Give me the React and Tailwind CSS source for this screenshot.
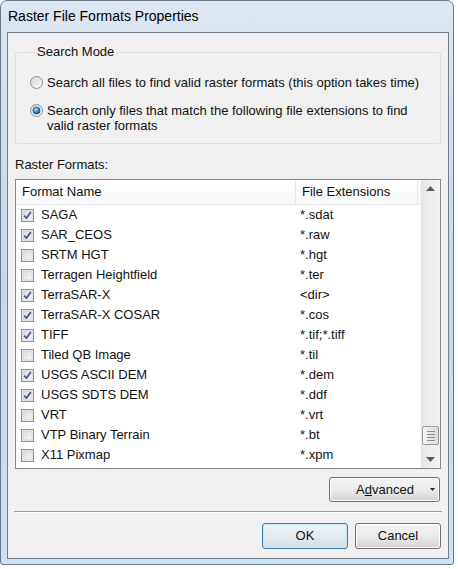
import React from 'react';

const formats = [
    ['SAGA', '*.sdat', true],
    ['SAR_CEOS', '*.raw', true],
    ['SRTM HGT', '*.hgt', false],
    ['Terragen Heightfield', '*.ter', false],
    ['TerraSAR-X', '<dir>', true],
    ['TerraSAR-X COSAR', '*.cos', true],
    ['TIFF', '*.tif;*.tiff', true],
    ['Tiled QB Image', '*.til', false],
    ['USGS ASCII DEM', '*.dem', true],
    ['USGS SDTS DEM', '*.ddf', true],
    ['VRT', '*.vrt', false],
    ['VTP Binary Terrain', '*.bt', false],
    ['X11 Pixmap', '*.xpm', false],
];

const Checkbox = ({ checked }) => (
    <svg width="13" height="13" viewBox="0 0 13 13" className="shrink-0">
        <defs>
            <linearGradient id="cbFill" x1="0" y1="0" x2="1" y2="1">
                <stop offset="0" stopColor="#d8d8d8" />
                <stop offset="1" stopColor="#f8f8f8" />
            </linearGradient>
        </defs>
        <rect x="0.5" y="0.5" width="12" height="12" fill="#f4f4f4" stroke="#8e8f8f" />
        <rect x="2" y="2" width="9" height="9" fill="url(#cbFill)" stroke="#c6c6c6" strokeWidth="0.6" />
        {checked && (
            <path d="M3.3 6.6 L5.4 9.2 L9.8 2.9" fill="none" stroke="#42579a" strokeWidth="1.7" strokeLinejoin="round" />
        )}
    </svg>
);

const Radio = ({ checked }) => (
    <svg width="13" height="13" viewBox="0 0 13 13" className="shrink-0">
        <defs>
            <linearGradient id="rdFill" x1="0" y1="0" x2="1" y2="1">
                <stop offset="0" stopColor="#d4d4d4" />
                <stop offset="1" stopColor="#fafafa" />
            </linearGradient>
            <radialGradient id="rdDot" cx="0.4" cy="0.35" r="0.7">
                <stop offset="0" stopColor="#a6e0fb" />
                <stop offset="0.55" stopColor="#2a8cc8" />
                <stop offset="1" stopColor="#0d3f72" />
            </radialGradient>
        </defs>
        <circle cx="6.5" cy="6.5" r="6" fill="url(#rdFill)" stroke="#8e8f8f" />
        {checked && <circle cx="6.5" cy="6.5" r="3.6" fill="url(#rdDot)" stroke="#1b4f80" strokeWidth="0.6" />}
    </svg>
);

const Arrow = ({ up }) => (
    <svg width="9" height="5" viewBox="0 0 9 5">
        <path d={up ? 'M0 5 L4.5 0 L9 5 Z' : 'M0 0 L4.5 5 L9 0 Z'} fill="#5a5a5a" />
    </svg>
);

const App = () => (
    <div className="w-[458px] h-[569px] bg-white overflow-hidden font-['Liberation_Sans',Arial,sans-serif] text-[13px] text-[#111]">
        {/* window frame */}
        <div className="w-[454px] h-[565px] rounded-t-[7px] rounded-b-[3px] border border-[#6a7888] bg-gradient-to-b from-[#dde7f1] via-[#c3d8ee] to-[#cfe2f5] flex flex-col">
            <div className="h-[31px] pl-[7px] flex items-center text-[14px] text-black">
                Raster File Formats Properties
            </div>

            <div className="flex-1 ml-[6px] mr-[4px] mb-[5px] border border-[#707d8c] bg-[#f0f0f0] flex flex-col px-[7px]">
                {/* Search Mode group */}
                <fieldset className="mt-[11px] border border-[#d5dfe5] rounded-[3px] pb-[10px] pl-[14px]">
                    <legend className="ml-[5px] px-[2px] leading-[16px]">Search Mode</legend>
                    <div className="mt-[15px] flex items-center gap-[4px] leading-[15px]">
                        <Radio />
                        <span>Search all files to find valid raster formats (this option takes time)</span>
                    </div>
                    <div className="mt-[13px] flex items-start gap-[4px] leading-[15px]">
                        <div className="pt-[1px]">
                            <Radio checked />
                        </div>
                        <span>
                            Search only files that match the following file extensions to find
                            <br />
                            valid raster formats
                        </span>
                    </div>
                </fieldset>

                <div className="mt-[13px] leading-[16px]">Raster Formats:</div>

                {/* list view */}
                <div className="mt-[6px] h-[290px] border border-[#828790] bg-white flex">
                    <div className="flex-1 flex flex-col">
                        <div className="h-[25px] flex border-b border-[#e5e5e5] bg-gradient-to-b from-white to-[#f7f8f9]">
                            <div className="w-[280px] pl-[6px] flex items-center border-r border-[#e3e6ea]">Format Name</div>
                            <div className="flex-1 pl-[6px] flex items-center border-r border-[#e3e6ea] mr-[2px]">File Extensions</div>
                        </div>
                        {formats.map(([name, ext, checked]) => (
                            <div key={name} className="h-[20px] flex items-center">
                                <div className="w-[281px] pl-[5px] flex items-center gap-[7px]">
                                    <Checkbox checked={checked} />
                                    <span>{name}</span>
                                </div>
                                <div className="pl-[3px]">{ext}</div>
                            </div>
                        ))}
                    </div>

                    {/* scrollbar */}
                    <div className="w-[20px] flex flex-col bg-gradient-to-r from-[#e6e6e6] to-[#f3f3f3] border-l border-[#f6f6f6]">
                        <div className="h-[17px] flex items-center justify-center">
                            <Arrow up />
                        </div>
                        <div className="flex-1 flex flex-col justify-end items-center pb-[6px]">
                            <div className="w-[17px] h-[19px] rounded-[2px] border border-[#9a9a9a] bg-gradient-to-r from-[#f4f4f4] to-[#dcdcdc] flex flex-col items-center justify-center gap-[2px]">
                                <div className="w-[8px] h-px bg-[#8a8a8a]" />
                                <div className="w-[8px] h-px bg-[#8a8a8a]" />
                                <div className="w-[8px] h-px bg-[#8a8a8a]" />
                                <div className="w-[8px] h-px bg-[#8a8a8a]" />
                            </div>
                        </div>
                        <div className="h-[17px] flex items-center justify-center">
                            <Arrow />
                        </div>
                    </div>
                </div>

                {/* Advanced */}
                <div className="mt-[8px] flex justify-end">
                    <div className="w-[111px] h-[25px] mr-[1px] rounded-[3px] border border-[#707070] bg-gradient-to-b from-[#f2f2f2] via-[#ebebeb] to-[#d3d3d3] shadow-[inset_0_0_0_1px_#fcfcfc] flex items-center">
                        <span className="flex-1 text-center pl-[10px]">
                            A<span className="underline">d</span>vanced
                        </span>
                        <svg width="5" height="3" viewBox="0 0 5 3" className="mr-[4px]">
                            <path d="M0 0 L2.5 3 L5 0 Z" fill="#222" />
                        </svg>
                    </div>
                </div>

                <div className="mt-[9px] -mx-[1px] h-[2px] border-t border-[#a0a0a0] border-b border-b-white" />

                <div className="mt-[10px] flex justify-end gap-[7px]">
                    <div className="w-[86px] h-[26px] rounded-[3px] border border-[#3c7fb1] bg-gradient-to-b from-[#f0f4f7] via-[#e4ebf0] to-[#d3dde4] shadow-[inset_0_0_0_1px_#c4e5f6] flex items-center justify-center">
                        OK
                    </div>
                    <div className="w-[86px] h-[26px] rounded-[3px] border border-[#707070] bg-gradient-to-b from-[#f2f2f2] via-[#ebebeb] to-[#d3d3d3] shadow-[inset_0_0_0_1px_#fcfcfc] flex items-center justify-center">
                        Cancel
                    </div>
                </div>
            </div>
        </div>
    </div>
);

export default App;
